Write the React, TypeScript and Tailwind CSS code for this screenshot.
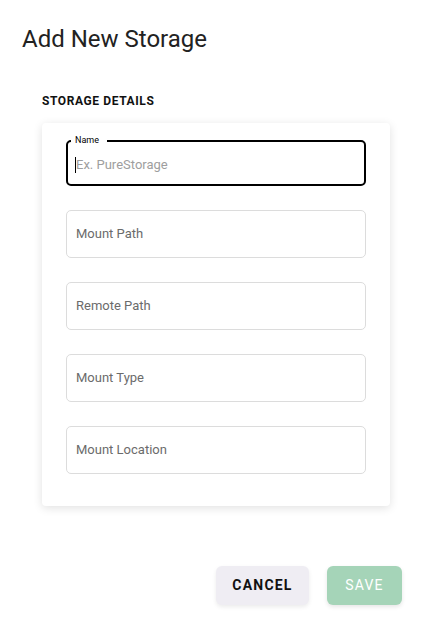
export default function App() {
  const fields = ["Mount Path", "Remote Path", "Mount Type", "Mount Location"];
  return (
    <div className="w-[432px] h-[634px] bg-white font-['Roboto',sans-serif] relative">
      <h1 className="pl-[22px] pt-[24px] text-[24px] leading-[30px] text-[#222] font-normal">
        Add New Storage
      </h1>
      <div className="pl-[42px] pt-[40px]">
        <h2 className="text-[12px] leading-[14px] font-bold tracking-[0.6px] text-[#111]">
          STORAGE DETAILS
        </h2>
        <div className="mt-[15px] w-[348px] bg-white rounded-[4px] shadow-[0_2px_10px_rgba(0,0,0,0.12)] px-[24px] pt-[17px] pb-[32px] flex flex-col gap-[24px]">
          <div className="relative h-[46px] border-2 border-black rounded-[5px] flex items-center px-[7px] pt-[4px]">
            <span className="absolute -top-[7px] left-[3px] bg-white pl-[4px] pr-[8px] text-[9px] leading-[10px] text-black">
              Name
            </span>
            <span className="w-px h-[16px] bg-black" />
            <input
              className="flex-1 outline-none text-[13px] text-[#333] placeholder:text-[#9e9e9e] bg-transparent"
              placeholder="Ex. PureStorage"
            />
          </div>
          {fields.map((f) => (
            <div
              key={f}
              className="h-[48px] border border-[#dcdcdc] rounded-[5px] flex items-center px-[9px] text-[13px] text-[#6b6b6b]"
            >
              {f}
            </div>
          ))}
        </div>
      </div>
      <div className="absolute top-[566px] left-[216px] flex gap-[18px]">
        <button className="w-[93px] h-[39px] rounded-[6px] bg-[#efedf3] text-[14px] font-bold tracking-[1.2px] text-[#111] shadow-[0_2px_4px_rgba(0,0,0,0.08)]">
          CANCEL
        </button>
        <button className="w-[75px] h-[39px] rounded-[6px] bg-[#a5d4b8] text-[14px] tracking-[1.2px] text-white shadow-[0_2px_4px_rgba(0,0,0,0.1)]">
          SAVE
        </button>
      </div>
    </div>
  );
}
